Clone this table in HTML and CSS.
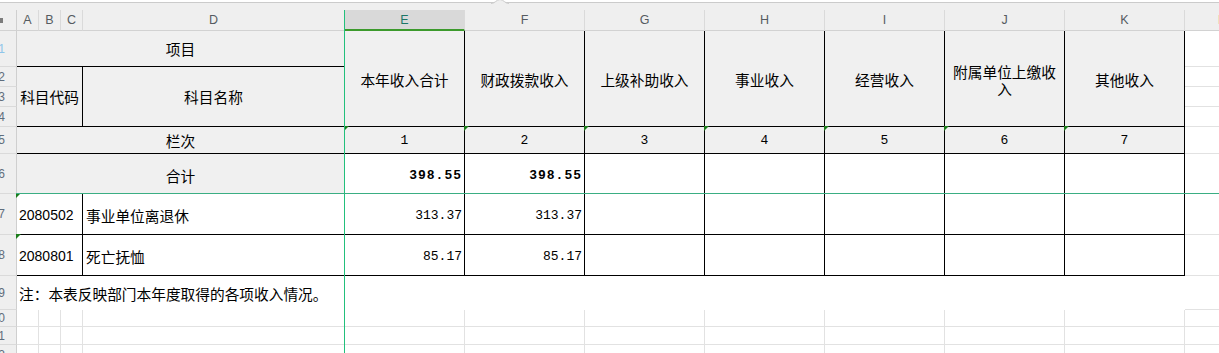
FILE: index.html
```html
<!DOCTYPE html>
<html lang="zh-CN">
<head>
<meta charset="utf-8">
<title>收入总表</title>
<link rel="stylesheet" href="styles.css">
</head>
<body>
<div class="app">
  <div class="topbar">
    <svg class="notch" width="18" height="5" viewBox="0 0 18 5"><path d="M0 4.5 C4 4.5 5.5 0.5 9 0.5 C12.5 0.5 14 4.5 18 4.5 Z" fill="#efefef"/><path d="M0 4.5 C4 4.5 5.5 0.5 9 0.5 C12.5 0.5 14 4.5 18 4.5" fill="none" stroke="#cbcbcb" stroke-width="1"/></svg>
  </div>
  <div class="sheet">
    <!-- column headers -->
    <div class="ch corner"><span class="selall"></span></div>
    <div class="ch">A</div>
    <div class="ch">B</div>
    <div class="ch">C</div>
    <div class="ch">D</div>
    <div class="ch sel">E</div>
    <div class="ch">F</div>
    <div class="ch">G</div>
    <div class="ch">H</div>
    <div class="ch">I</div>
    <div class="ch">J</div>
    <div class="ch">K</div>
    <div class="ch">L</div>

    <!-- row 1 -->
    <div class="rh hl"><span>1</span></div>
    <div class="c b g span4">项目</div>
    <div class="c b g hdr">本年收入合计</div>
    <div class="c b g hdr">财政拨款收入</div>
    <div class="c b g hdr">上级补助收入</div>
    <div class="c b g hdr">事业收入</div>
    <div class="c b g hdr">经营收入</div>
    <div class="c b g hdr">附属单位上缴收入</div>
    <div class="c b g hdr">其他收入</div>
    <div class="lc"></div>

    <!-- row 2 -->
    <div class="rh"><span>2</span></div>
    <div class="c b g span3 rows3">科目代码</div>
    <div class="c b g rows3">科目名称</div>
    <div class="lc"></div>

    <!-- row 3 -->
    <div class="rh"><span>3</span></div>
    <div class="lc"></div>

    <!-- row 4 -->
    <div class="rh"><span>4</span></div>
    <div class="lc"></div>

    <!-- row 5 -->
    <div class="rh"><span>5</span></div>
    <div class="c b g span4">栏次</div>
    <div class="c b g num tri">1</div>
    <div class="c b g num tri">2</div>
    <div class="c b g num tri">3</div>
    <div class="c b g num tri">4</div>
    <div class="c b g num tri">5</div>
    <div class="c b g num tri">6</div>
    <div class="c b g num tri">7</div>
    <div class="lc"></div>

    <!-- row 6 -->
    <div class="rh"><span>6</span></div>
    <div class="c b g span4 low">合计</div>
    <div class="c b num bold r low">398.55</div>
    <div class="c b num bold r low">398.55</div>
    <div class="c b"></div>
    <div class="c b"></div>
    <div class="c b"></div>
    <div class="c b"></div>
    <div class="c b"></div>
    <div class="lc"></div>

    <!-- row 7 -->
    <div class="rh"><span>7</span></div>
    <div class="c b span3 code l low tri">2080502</div>
    <div class="c b l low">事业单位离退休</div>
    <div class="c b num r low">313.37</div>
    <div class="c b num r low">313.37</div>
    <div class="c b"></div>
    <div class="c b"></div>
    <div class="c b"></div>
    <div class="c b"></div>
    <div class="c b"></div>
    <div class="lc"></div>

    <!-- row 8 -->
    <div class="rh"><span>8</span></div>
    <div class="c b span3 code l low tri">2080801</div>
    <div class="c b l low">死亡抚恤</div>
    <div class="c b num r low">85.17</div>
    <div class="c b num r low">85.17</div>
    <div class="c b"></div>
    <div class="c b"></div>
    <div class="c b"></div>
    <div class="c b"></div>
    <div class="c b"></div>
    <div class="lc"></div>

    <!-- row 9 -->
    <div class="rh"><span>9</span></div>
    <div class="c span11 l note">注：本表反映部门本年度取得的各项收入情况。</div>
    <div class="lc"></div>

    <!-- row 10 -->
    <div class="rh"><span>10</span></div>
    <div class="e"></div><div class="e"></div><div class="e"></div><div class="e"></div>
    <div class="e"></div><div class="e"></div><div class="e"></div><div class="e"></div>
    <div class="e"></div><div class="e"></div><div class="e"></div><div class="e"></div>

    <!-- row 11 -->
    <div class="rh"><span>11</span></div>
    <div class="e"></div><div class="e"></div><div class="e"></div><div class="e"></div>
    <div class="e"></div><div class="e"></div><div class="e"></div><div class="e"></div>
    <div class="e"></div><div class="e"></div><div class="e"></div><div class="e"></div>

    <!-- row 12 -->
    <div class="rh"><span>12</span></div>
    <div class="e"></div><div class="e"></div><div class="e"></div><div class="e"></div>
    <div class="e"></div><div class="e"></div><div class="e"></div><div class="e"></div>
    <div class="e"></div><div class="e"></div><div class="e"></div><div class="e"></div>
  </div>
  <div class="freeze-v"></div>
  <div class="freeze-h"></div>
</div>
</body>
</html>
```

FILE: styles.css
```css
* { box-sizing: border-box; }

html, body {
  margin: 0;
  padding: 0;
  background: #ffffff;
}

body {
  width: 1219px;
  height: 353px;
  overflow: hidden;
  font-family: "Noto Sans CJK SC", "Noto Sans", sans-serif;
  color: #000;
}

.app {
  position: relative;
  width: 1219px;
  height: 353px;
  overflow: hidden;
}

.topbar {
  position: relative;
  height: 8px;
  margin-top: 2px;
  border-top: 1px solid #cbcbcb;
  background: #efefef;
}

.notch {
  position: absolute;
  left: 491px;
  top: -4px;
  display: block;
}

.sheet {
  display: grid;
  grid-template-columns: 17px 22px 22px 22px 262px repeat(7, 120px) 74px;
  grid-template-rows: 21px 36px 20px 20px 20px 27px 40px 41px 41px 34px 17px 18px 20px;
  width: 1259px;
}

/* column headers */
.ch {
  display: flex;
  align-items: center;
  justify-content: center;
  background: #efefef;
  border-right: 1px solid #dadada;
  border-bottom: 1px solid #d2d2d2;
  font-family: "Liberation Sans", Arial, sans-serif;
  font-size: 12.5px;
  color: #555b61;
}

.ch.sel {
  background: #d9d9d9;
  color: #1c7667;
  border-bottom: 2px solid #3c9a2c;
}

.ch.corner {
  justify-content: flex-start;
  border-right: 1px solid #cfcfcf;
}

.selall {
  display: block;
  width: 3px;
  height: 5px;
  background: #7c7c7c;
}

/* row headers */
.rh {
  display: flex;
  align-items: center;
  justify-content: flex-end;
  padding-right: 11px;
  overflow: hidden;
  background: #efefef;
  border-right: 1px solid #cfcfcf;
  border-bottom: 1px solid #dadada;
  font-family: "Liberation Sans", Arial, sans-serif;
  font-size: 12px;
  color: #5f6d7c;
  white-space: nowrap;
}

.rh.hl { color: #8ec5ea; }

/* cells */
.c {
  position: relative;
  display: flex;
  align-items: center;
  justify-content: center;
  text-align: center;
  font-size: 14.7px;
  line-height: 17px;
  padding: 0 4px;
  white-space: nowrap;
}

.b {
  border-right: 1px solid #000;
  border-bottom: 1px solid #000;
}

.g { background: #f0f0f0; }

.span4 { grid-column: span 4; }
.span3 { grid-column: span 3; }
.span11 { grid-column: span 11; }
.rows3 { grid-row: span 3; }

.hdr {
  grid-row: span 4;
  white-space: normal;
  padding: 2px 4px 0;
}

.l { justify-content: flex-start; padding-left: 3px; }
.r { justify-content: flex-end; padding-right: 2px; }
.low { padding-top: 3px; }

.num {
  font-family: "Liberation Mono", "DejaVu Sans Mono", monospace;
  font-size: 13px;
}

.bold {
  font-weight: bold;
  letter-spacing: 1px;
  padding-right: 2px;
}

.code {
  font-family: "Liberation Sans", Arial, sans-serif;
  font-size: 14px;
  padding-left: 2px;
}

.note {
  padding-left: 2px;
  padding-top: 1px;
}

.tri::before {
  content: "";
  position: absolute;
  left: -1px;
  top: -1px;
  border-top: 5px solid #1c7d1c;
  border-right: 5px solid transparent;
}

/* L column cells in table rows */
.lc {
  border-bottom: 1px solid #e2e2e2;
}

/* empty grid cells */
.e {
  border-right: 1px solid #e2e2e2;
  border-bottom: 1px solid #e2e2e2;
}

/* freeze lines */
.freeze-v {
  position: absolute;
  left: 344px;
  top: 10px;
  bottom: 0;
  width: 1px;
  background: #22c07c;
}

.freeze-h {
  position: absolute;
  left: 16px;
  right: 0;
  top: 193px;
  height: 1px;
  background: #3aae83;
}
```
